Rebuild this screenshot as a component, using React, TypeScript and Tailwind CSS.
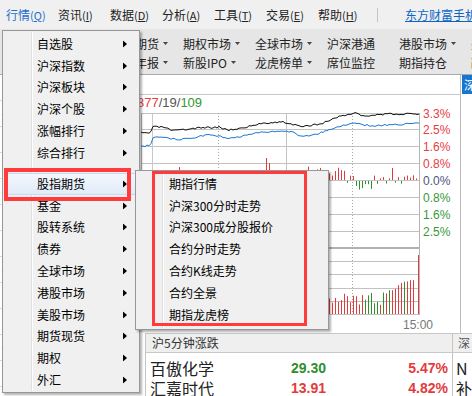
import React from "react";

const CJK = "font-['Noto_Sans_CJK_SC','Microsoft_YaHei',sans-serif]";
const NUM = "font-['Liberation_Sans',Arial,sans-serif]";

function rng(seed: number) {
  let s = seed;
  return () => {
    s = (s * 16807) % 2147483647;
    return (s - 1) / 2147483646;
  };
}

function series(keys: [number, number][], seed: number) {
  const r = rng(seed);
  const pts: string[] = [];
  for (let x = 1; x <= 279; x += 2) {
    let i = 0;
    while (i < keys.length - 2 && keys[i + 1][0] < x) i++;
    const [x0, y0] = keys[i];
    const [x1, y1] = keys[i + 1];
    const t = (x - x0) / (x1 - x0);
    const y = y0 + (y1 - y0) * t + (r() - 0.5) * 1.8;
    pts.push(`${x},${y.toFixed(1)}`);
  }
  return pts.join(" ");
}

const blackLine = series(
  [
    [1, 39], [10, 39], [13, 33], [23, 33], [33, 37], [57, 34], [80, 33], [87, 36],
    [103, 34], [123, 29], [143, 28], [163, 33], [183, 29], [200, 22], [217, 19],
    [223, 22], [250, 20], [279, 20],
  ],
  3
);
const blueLine = series(
  [
    [1, 53], [10, 51], [13, 44], [23, 43], [37, 46], [57, 43], [70, 40], [87, 44],
    [103, 42], [123, 38], [140, 37], [153, 38], [163, 43], [183, 38], [200, 32],
    [217, 29], [230, 32], [250, 31], [279, 29],
  ],
  9
);

const priceVol = (() => {
  const r = rng(11);
  const out: { x: number; h: number }[] = [];
  for (let x = 3; x < 279; x += 3) {
    let h = r() < 0.85 ? 1 + r() * 4 : -(1 + r() * 2);
    if (x < 20) h = 2 + r() * 10;
    if (x === 39) h = 13;
    if (x > 165 && x < 206) h = 3 + r() * 12;
    if (x > 214 && x < 232) h = -(3 + r() * 8);
    if (x === 126) h = 22;
    if (x === 129) h = 17;
    if (x === 252) h = 12;
    out.push({ x, h });
  }
  return out;
})();

const lowVol = (() => {
  const r = rng(5);
  const out: { x: number; h: number; red: boolean }[] = [];
  let red = true;
  for (let x = 3; x < 276; x += 3) {
    if (r() < 0.3) red = !red;
    let h = 9 + r() * 12;
    if (x > 240) h = 14 + (x - 240) * 0.6 + r() * 6;
    out.push({ x, h, red });
  }
  out.push({ x: 278, h: 59, red: true });
  return out;
})();

function Chart() {
  const grid = [19, 35, 52, 69, 86, 103, 120, 137];
  const vol = [167, 180, 194, 207, 220];
  const labels: [string, number, string][] = [
    ["3.3%", 19, "#e8403f"],
    ["2.5%", 35, "#e8403f"],
    ["1.6%", 52, "#e8403f"],
    ["0.8%", 69, "#e8403f"],
    ["0.0%", 86, "#50557a"],
    ["0.8%", 103, "#3a983a"],
    ["1.6%", 120, "#3a983a"],
    ["2.5%", 137, "#3a983a"],
  ];
  const font = "Liberation Sans, Arial, sans-serif";
  return (
    <svg width="320" height="238" viewBox="0 1 320 238" className="block overflow-visible">
      <text x="-3" y="13" fontSize="13" fontFamily={font}>
        <tspan fill="#e8403f">377</tspan>
        <tspan fill="#555">/19/</tspan>
        <tspan fill="#2e9a2e">109</tspan>
      </text>
      {grid.map((y) => (
        <line key={y} x1="1" x2="280" y1={y + 0.5} y2={y + 0.5} stroke="#c2c2c2" />
      ))}
      <rect x="1" y="153" width="279" height="2" fill="#b0b0b0" />
      {vol.map((y) => (
        <line key={y} x1="1" x2="280" y1={y + 0.5} y2={y + 0.5} stroke="#c2c2c2" />
      ))}
      <line x1="1.5" x2="1.5" y1="19" y2="221" stroke="#b5b5b5" />
      <line x1="12.5" x2="12.5" y1="19" y2="221" stroke="#c8c8c8" />
      <line x1="78.5" x2="78.5" y1="19" y2="221" stroke="#a8a8a8" strokeDasharray="1 2" />
      <line x1="146.5" x2="146.5" y1="19" y2="221" stroke="#c2c2c2" />
      <line x1="212.5" x2="212.5" y1="19" y2="221" stroke="#a8a8a8" strokeDasharray="1 2" />
      <line x1="279.5" x2="279.5" y1="19" y2="221" stroke="#b5b5b5" />
      {priceVol.map((b) =>
        b.h > 0 ? (
          <rect key={b.x} x={b.x} y={86 - b.h} width="1" height={b.h} fill="#e23b3b" />
        ) : (
          <rect key={b.x} x={b.x} y={87} width="1" height={-b.h} fill="#2f8f2f" />
        )
      )}
      <polyline points={blackLine} fill="none" stroke="#111" strokeWidth="1" />
      <polyline points={blueLine} fill="none" stroke="#1f78d1" strokeWidth="1" />
      {lowVol.map((b) => (
        <rect
          key={b.x}
          x={b.x}
          y={220 - b.h}
          width="1"
          height={b.h}
          fill={b.red ? "#e23b3b" : "#2f8f2f"}
        />
      ))}
      {labels.map(([t, y, c], i) => (
        <text key={i} x="283" y={y + 4.5} fontSize="12" fill={c} fontFamily={font}>
          {t}
        </text>
      ))}
      <text x="263" y="235" fontSize="12" fill="#777" fontFamily={font}>
        15:00
      </text>
    </svg>
  );
}

function TopBar() {
  const items: [string, string][] = [
    ["行情", "Q"],
    ["资讯", "I"],
    ["数据", "D"],
    ["分析", "A"],
    ["工具", "T"],
    ["交易", "E"],
    ["帮助", "H"],
  ];
  return (
    <div className="h-[29px] bg-[#f0f0f0] flex items-center pl-[6px] whitespace-nowrap">
      {items.map(([t, k], i) => (
        <div key={t} className={`w-[52px] shrink-0 ${i === 0 ? "text-[#1d6fce]" : "text-[#222]"}`}>
          {t}
          <span className="text-[11px]">
            (<span className="underline">{k}</span>)
          </span>
        </div>
      ))}
      <div className="ml-[7px] w-px h-[14px] bg-[#c4c4c4] shrink-0" />
      <div className="ml-[27px] text-[#0b65c6] underline shrink-0">东方财富手机版</div>
    </div>
  );
}

function Tri() {
  return (
    <svg width="5" height="3" viewBox="0 0 5 3" className="ml-[4px] shrink-0">
      <path d="M0 0H5L2.5 3Z" fill="#444" />
    </svg>
  );
}

function Toolbar() {
  const row1: [string, boolean][] = [
    ["沪深京A股", true],
    ["商品期货", true],
    ["期权市场", true],
    ["全球市场", true],
    ["沪深港通", false],
    ["港股市场", true],
    ["美股市场", true],
  ];
  const row2: [string, boolean][] = [
    ["研究报告", true],
    ["业绩年报", true],
    ["新股IPO", true],
    ["龙虎榜单", true],
    ["席位监控", false],
    ["期指持仓", false],
    ["融资融券", true],
  ];
  const row = (items: [string, boolean][]) => (
    <div className="h-[19px] flex items-center pl-[39px] whitespace-nowrap">
      {items.map(([t, d]) => (
        <div key={t} className="w-[72px] shrink-0 flex items-center text-[#222]">
          {t}
          {d && <Tri />}
        </div>
      ))}
    </div>
  );
  return (
    <div className="h-[46px] bg-[#e6e6e6] border-b border-[#a9a9a9] pt-[5px]">
      {row(row1)}
      {row(row2)}
    </div>
  );
}

function LeftPanel() {
  return (
    <div className="w-[140px] shrink-0 flex flex-col bg-white">
      {Array.from({ length: 12 }).map((_, i) => (
        <div key={i} className="h-[26px] border-b border-[#dcdcdc] text-[#e23b3b] pl-px">
          {i % 3 === 1 ? "12.3" : ""}
        </div>
      ))}
    </div>
  );
}

function BottomPanel() {
  const rows: [string, string, string, string][] = [
    ["百傲化学", "29.30", "#2f8f2f", "5.47%"],
    ["汇嘉时代", "13.91", "#e23b3b", "4.82%"],
  ];
  return (
    <div className="flex h-[63px]">
      <div className="ml-[5px] w-[317px] border-l border-r border-[#c4c4c4] flex flex-col">
        <div className="h-[20px] bg-[#efefef] border-y border-[#c8c8c8] flex items-center pl-[6px] text-[#333]">
          沪5分钟涨跌
        </div>
        <div className="pt-[5px]">
          {rows.map(([n, p, c, pct]) => (
            <div key={n} className="h-[20px] flex items-center">
              <div className="w-[145px] pl-[4px] text-[16px] text-[#222]">{n}</div>
              <div className={`w-[60px] text-[14px] font-bold ${NUM}`} style={{ color: c }}>
                {p}
              </div>
              <div className={`flex-1 text-right pr-[4px] text-[14px] font-bold text-[#e23b3b] ${NUM}`}>
                {pct}
              </div>
            </div>
          ))}
        </div>
      </div>
      <div className="flex-1 flex flex-col whitespace-nowrap">
        <div className="h-[20px] bg-[#efefef] border-y border-[#c8c8c8] flex items-center pl-[5px] text-[#555]">
          深
        </div>
        <div className="pt-[5px] text-[16px] text-[#222] pl-[3px]">
          <div className="h-[20px] leading-[20px]">N</div>
          <div className="h-[20px] leading-[20px]">补</div>
        </div>
      </div>
    </div>
  );
}

function MenuArrow({ left }: { left: string }) {
  return (
    <svg
      width="4"
      height="7"
      viewBox="0 0 4 7"
      className={`absolute top-1/2 -translate-y-1/2 ${left}`}
    >
      <path d="M0 0L4 3.5L0 7Z" fill="#000" />
    </svg>
  );
}

function MainMenu() {
  const a = ["自选股", "沪深指数", "沪深板块", "沪深个股", "涨幅排行", "综合排行"];
  const b = ["股指期货", "基金", "股转系统", "债券", "全球市场", "港股市场", "美股市场", "期货现货", "期权", "外汇"];
  const item = (t: string, hi: boolean) => (
    <div key={t} className="relative h-[21.8px] flex items-center pl-[34px]">
      {hi && (
        <div className="absolute left-[1px] right-[1px] top-0 bottom-0 rounded-[3px] border border-[#c6d9f1] bg-linear-to-b from-[#f3f7fd] to-[#e1ebf8]" />
      )}
      <span className="relative">{t}</span>
      <MenuArrow left="left-[120px]" />
    </div>
  );
  return (
    <div className="absolute left-[2px] top-[30px] w-[138px] h-[363px] border border-[#979797] bg-[#f0f0f0] shadow-[2px_2px_2px_rgba(0,0,0,0.3)] pt-[2px] text-black">
      <div className="absolute left-[28px] top-[1px] bottom-[1px] w-[2px] border-l border-l-[#e0e0e0] border-r border-r-white" />
      {a.map((t) => item(t, false))}
      <div className="h-[9.2px]" />
      {b.map((t, i) => item(t, i === 0))}
    </div>
  );
}

function SubMenu() {
  const items = ["期指行情", "沪深300分时走势", "沪深300成分股报价", "合约分时走势", "合约K线走势", "合约全景", "期指龙虎榜"];
  return (
    <div className="absolute left-[135px] top-[170px] w-[194px] h-[160px] border border-[#979797] bg-[#f0f0f0] shadow-[2px_2px_2px_rgba(0,0,0,0.3)] pt-[2px] text-black">
      <div className="absolute left-[26px] top-[1px] bottom-[1px] w-[2px] border-l border-l-[#e0e0e0] border-r border-r-white" />
      {items.map((t) => (
        <div key={t} className="relative h-[21.8px] flex items-center pl-[33px] whitespace-nowrap">
          {t}
        </div>
      ))}
    </div>
  );
}

export default function App() {
  return (
    <div className={`relative w-[472px] h-[396px] overflow-hidden bg-white text-[12px] text-black ${CJK}`}>
      <TopBar />
      <Toolbar />
      <div className="flex h-[321px]">
        <LeftPanel />
        <div className="flex-1 flex flex-col min-w-0">
          <div className="flex h-[258px]">
            <div className="w-[321px] shrink-0 border-r border-[#bdbdbd] flex flex-col">
              <div className="h-[20px] border-b border-[#c8c8c8] shrink-0" />
              <Chart />
            </div>
            <div className="flex-1 pl-px overflow-hidden">
              <div className="mt-0 h-[19px] w-[16px] bg-[#1677d2] text-white flex items-center pl-[2px]">
                深
              </div>
            </div>
          </div>
          <BottomPanel />
        </div>
      </div>
      <MainMenu />
      <SubMenu />
      <div className="absolute left-[4px] top-[168px] w-[127px] h-[33px] border-[4px] border-[#ff3b3b]" />
      <div className="absolute left-[152px] top-[171px] w-[155px] h-[155px] border-[3px] border-[#ff3b3b]" />
    </div>
  );
}
